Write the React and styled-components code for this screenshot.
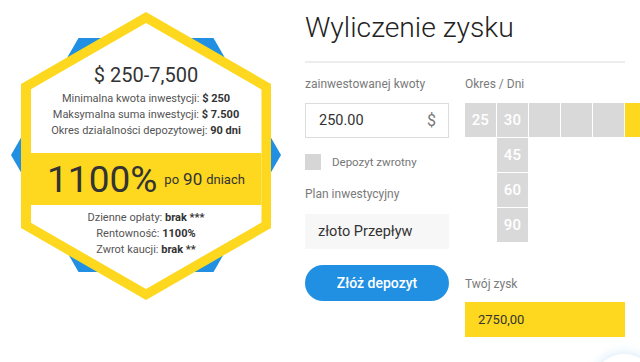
import styled, { createGlobalStyle } from "styled-components";

const GlobalStyle = createGlobalStyle`
  html, body {
    margin: 0;
    padding: 0;
    background: #fff;
    font-family: Roboto, "Liberation Sans", Arial, sans-serif;
  }
  * { box-sizing: border-box; }
`;

const YELLOW = "#fdd81f";
const BLUE = "#2190e2";

const Page = styled.div`
  position: relative;
  display: flex;
  width: 640px;
  height: 362px;
  overflow: hidden;
`;

// left: hexagon offer card
const Badge = styled.div`
  position: relative;
  flex: 0 0 305px;
  padding: 12px 0 0 21px;
`;

const BlueHex = styled.div`
  position: absolute;
  left: 11px;
  top: 38px;
  width: 270px;
  height: 234px;
  background: ${BLUE};
  clip-path: polygon(25% 0, 75% 0, 100% 50%, 75% 100%, 25% 100%, 0 50%);
`;

const YellowHex = styled.div`
  position: relative;
  width: 250px;
  height: 288px;
  background: ${YELLOW};
  clip-path: polygon(50% 0, 100% 25%, 100% 75%, 50% 100%, 0 75%, 0 25%);
  display: flex;
  align-items: center;
  justify-content: center;
`;

const WhiteHex = styled.div`
  width: 231px;
  height: 266px;
  background: #fff;
  clip-path: polygon(50% 0, 100% 25%, 100% 75%, 50% 100%, 0 75%, 0 25%);
  display: flex;
  flex-direction: column;
  align-items: center;
  padding-top: 40px;
`;

const Price = styled.div`
  font-size: 20px;
  line-height: 24px;
  color: #333;
`;

const InfoList = styled.div`
  margin-top: ${(p) => p.$top}px;
  text-align: center;
  font-size: 11px;
  line-height: 16px;
  color: #555;

  b {
    color: #333;
    font-weight: 700;
  }
`;

const Band = styled.div`
  align-self: stretch;
  margin-top: 14px;
  height: 52px;
  background: ${YELLOW};
  display: flex;
  align-items: center;
  justify-content: center;
  color: #333;
`;

const Big = styled.span`
  font-size: 37px;
  line-height: 1;
`;

const Small = styled.span`
  font-size: ${(p) => p.$size}px;
  margin-left: ${(p) => p.$gap}px;
  vertical-align: 8px;
`;

// right: profit calculator
const Calc = styled.div`
  flex: 1 0 auto;
  padding-top: 11px;
`;

const Title = styled.h1`
  margin: 0;
  font-size: 28.3px;
  font-weight: 300;
  line-height: 34px;
  color: #222;
`;

const Rule = styled.div`
  width: 320px;
  height: 2px;
  margin-top: 16px;
  background: #ededed;
`;

const Columns = styled.div`
  display: flex;
  gap: 16px;
  margin-top: 13px;
`;

const Column = styled.div`
  display: flex;
  flex-direction: column;
  width: ${(p) => p.$width}px;
`;

const Label = styled.div`
  margin-top: ${(p) => p.$top || 0}px;
  font-size: 12px;
  line-height: 16px;
  color: #7a7a7a;
  white-space: nowrap;
`;

const Field = styled.div`
  margin-top: ${(p) => p.$top}px;
  height: 35px;
  display: flex;
  align-items: center;
  justify-content: space-between;
  padding: 0 12px 0 13px;
  font-size: 14.5px;
  color: #333;
  background: ${(p) => p.$bg || "#fff"};
  border: ${(p) => (p.$bordered ? "1px solid #dcdcdc" : "none")};
`;

const Currency = styled.span`
  font-size: 16px;
  color: #777;
`;

const CheckRow = styled.label`
  margin-top: 16px;
  display: flex;
  align-items: center;
  gap: 11px;
  font-size: 11.5px;
  color: #777;
`;

const CheckBox = styled.span`
  width: 16px;
  height: 16px;
  background: #d6d6d6;
`;

const DepositButton = styled.button`
  margin-top: 16px;
  height: 36px;
  border: none;
  border-radius: 18px;
  background: ${BLUE};
  color: #fff;
  font-family: inherit;
  font-size: 14px;
  font-weight: 500;
  cursor: pointer;
`;

const DayGrid = styled.div`
  margin-top: 11px;
  display: grid;
  grid-template-columns: repeat(6, 30.6px);
  grid-auto-rows: 33.5px;
  gap: 1.5px;
`;

const Day = styled.div`
  grid-column: ${(p) => p.$col || "auto"};
  background: ${(p) => (p.$active ? YELLOW : "#d9d9d9")};
  color: #fff;
  font-size: 15px;
  font-weight: 500;
  display: flex;
  align-items: center;
  justify-content: center;
`;

const Profit = styled.div`
  margin-top: 10px;
  height: 35px;
  display: flex;
  align-items: center;
  padding-left: 13px;
  background: ${YELLOW};
  font-size: 13px;
  color: #333;
`;

const ChatBubble = styled.div`
  position: absolute;
  left: 592px;
  top: 354px;
  width: 64px;
  height: 64px;
  border-radius: 50%;
  background: #fff;
  box-shadow: 0 0 12px rgba(33, 144, 226, 0.22);
`;

const topDays = ["25", "30", "", "", ""];
const extraDays = ["45", "60", "90"];

export default function App() {
  return (
    <>
      <GlobalStyle />
      <Page>
        <Badge>
          <BlueHex />
          <YellowHex>
            <WhiteHex>
              <Price>$ 250-7,500</Price>
              <InfoList $top={4}>
                <div>Minimalna kwota inwestycji: <b>$ 250</b></div>
                <div>Maksymalna suma inwestycji: <b>$ 7.500</b></div>
                <div>Okres działalności depozytowej: <b>90 dni</b></div>
              </InfoList>
              <Band>
                <Big>1100%</Big>
                <Small $size={13} $gap={7}>po</Small>
                <Small $size={17} $gap={4}>90</Small>
                <Small $size={13} $gap={4}>dniach</Small>
              </Band>
              <InfoList $top={5}>
                <div>Dzienne opłaty: <b>brak ***</b></div>
                <div>Rentowność: <b>1100%</b></div>
                <div>Zwrot kaucji: <b>brak **</b></div>
              </InfoList>
            </WhiteHex>
          </YellowHex>
        </Badge>

        <Calc>
          <Title>Wyliczenie zysku</Title>
          <Rule />
          <Columns>
            <Column $width={144}>
              <Label>zainwestowanej kwoty</Label>
              <Field $top={11} $bordered>
                250.00
                <Currency>$</Currency>
              </Field>
              <CheckRow>
                <CheckBox />
                Depozyt zwrotny
              </CheckRow>
              <Label $top={16}>Plan inwestycyjny</Label>
              <Field $top={12} $bg="#f7f7f7">złoto Przepływ</Field>
              <DepositButton>Złóż depozyt</DepositButton>
            </Column>
            <Column $width={160}>
              <Label>Okres / Dni</Label>
              <DayGrid>
                {topDays.map((d, i) => (
                  <Day key={i}>{d}</Day>
                ))}
                <Day $active />
                {extraDays.map((d) => (
                  <Day key={d} $col={2}>{d}</Day>
                ))}
              </DayGrid>
              <Label $top={34.5}>Twój zysk</Label>
              <Profit>2750,00</Profit>
            </Column>
          </Columns>
        </Calc>
        <ChatBubble />
      </Page>
    </>
  );
}
